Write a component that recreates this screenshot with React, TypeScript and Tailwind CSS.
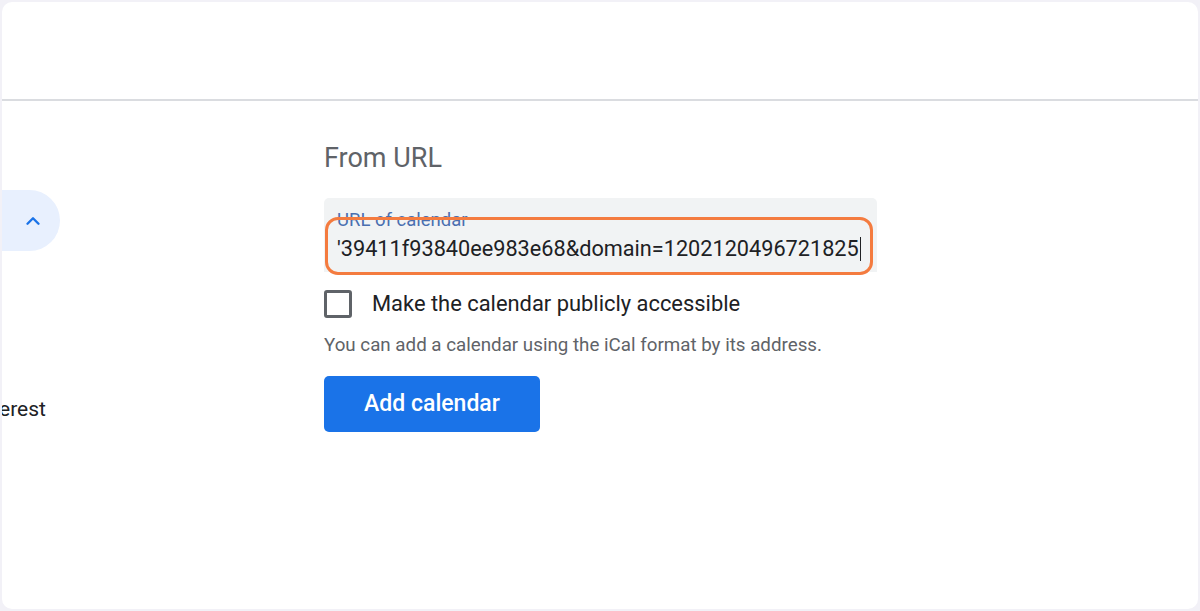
import { ChevronUp } from "lucide-react";

const font = { fontFamily: "Roboto, 'Liberation Sans', sans-serif" };

function SideNav() {
  return (
    <div className="w-[322px] shrink-0 overflow-hidden">
      <div className="mt-[89px] flex h-[61px] w-[58px] items-center rounded-r-full bg-[#e8f0fe] pl-[20px]">
        <ChevronUp className="h-[22px] w-[22px] text-[#1a73e8]" strokeWidth={2.6} />
      </div>
      <div className="mt-[144px] -ml-[3px] text-[21px] leading-[28px] text-[#202124]">erest</div>
    </div>
  );
}

function UrlForm() {
  return (
    <div className="w-[553px] pt-[39px]">
      <h2 className="text-[27px] leading-[36px] text-[#5f6368]">From URL</h2>

      <div className="relative mt-[22px]">
        <div className="h-[74px] overflow-hidden rounded-t-[5px] bg-[#f1f3f4] pl-[13px] pt-[12px]">
          <div className="text-[18.5px] leading-[21px] text-[#4a6fb0]">URL of calendar</div>
          <div className="mt-[4px] flex items-center whitespace-nowrap text-[21.7px] leading-[28px] text-[#202124]">
            <span>'39411f93840ee983e68&amp;domain=1202120496721825</span>
            <span className="ml-[1px] h-[24px] w-[1.5px] shrink-0 bg-[#202124]" />
          </div>
        </div>
        {/* highlight overlay */}
        <div className="pointer-events-none absolute left-[1px] top-[19px] h-[58px] w-[548px] rounded-[13px] border-[3px] border-[#f47b3f]" />
      </div>

      <label className="mt-[18px] flex items-center gap-[20px]">
        <span className="h-[28px] w-[28px] shrink-0 rounded-[3px] border-[3px] border-[#5f6368]" />
        <span className="text-[21.9px] leading-[28px] text-[#202124]">Make the calendar publicly accessible</span>
      </label>

      <p className="mt-[14px] text-[18.75px] leading-[26px] text-[#5f6368]">
        You can add a calendar using the iCal format by its address.
      </p>

      <button className="mt-[18px] h-[56px] w-[216px] rounded-[5px] bg-[#1a73e8] text-[23px] font-medium text-white">
        Add calendar
      </button>
    </div>
  );
}

export default function App() {
  return (
    <div className="h-[611px] w-full bg-[#f2f1f7] p-[2px]" style={font}>
      <div className="flex h-full flex-col overflow-hidden rounded-[10px] bg-white">
        <div className="h-[99px] shrink-0 border-b-2 border-[#dadce0]" />
        <div className="flex flex-1">
          <SideNav />
          <UrlForm />
        </div>
      </div>
    </div>
  );
}
